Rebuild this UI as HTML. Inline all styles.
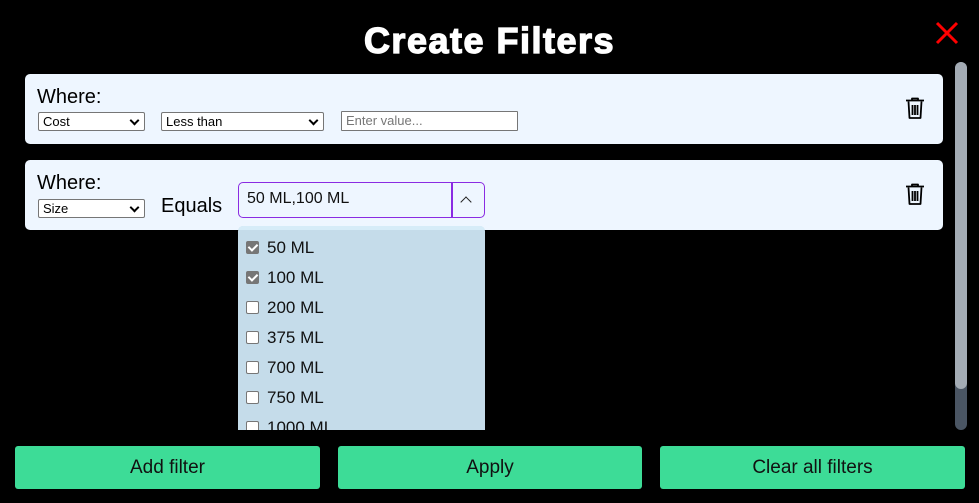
<!DOCTYPE html>
<html><head><style>
*{box-sizing:border-box;margin:0;padding:0}
body{width:979px;height:503px;background:#000;font-family:"Liberation Sans",Arial,sans-serif;position:relative;overflow:hidden}
.abs{position:absolute}
h1{position:absolute;left:0;width:979px;text-align:center;top:20px;color:#fff;font-size:36px;font-weight:900;letter-spacing:1.5px;-webkit-text-stroke:1.3px #fff}
.card{position:absolute;left:25px;width:918px;height:70px;background:#eef6ff;border-radius:5px}
.where{position:absolute;left:12px;top:12px;font-size:20px;color:#000}
.sel{position:absolute;height:19px;border:1px solid #767676;border-radius:2px;background:#fff;font-size:13px;padding-left:4px;line-height:17px;color:#000}
.sel.dd:after{content:"";position:absolute;right:6px;top:4px;width:5px;height:5px;border-right:2px solid #000;border-bottom:2px solid #000;transform:rotate(45deg)}
.btn{position:absolute;top:446px;height:43px;background:#3ddc97;border-radius:3px;text-align:center;line-height:43px;font-size:19px;color:#111}
.item{position:absolute;left:8px;font-size:17px;color:#111}
.cb{display:inline-block;width:13px;height:13px;border:1px solid #767676;border-radius:2px;background:#fff;vertical-align:-1px;margin-right:8px;position:relative}
.cb.on{background:#767676;border-color:#767676}
.cb.on:after{content:"";position:absolute;left:3px;top:0px;width:4px;height:7px;border-right:2px solid #fff;border-bottom:2px solid #fff;transform:rotate(45deg)}
</style></head><body>
<h1>Create Filters</h1>
<svg class="abs" style="left:934px;top:20px" width="26" height="26" viewBox="0 0 26 26"><path d="M3 3L23 23M23 3L3 23" stroke="#f00" stroke-width="3"/></svg>
<div class="abs" style="left:955px;top:62px;width:12px;height:368px;background:#4a5563;border-radius:6px"></div>
<div class="abs" style="left:955px;top:62px;width:12px;height:327px;background:#a3abb4;border-radius:6px"></div>

<div class="card" style="top:74px">
<div class="where">Where:</div>
<div class="sel dd" style="left:13px;top:38px;width:107px">Cost</div>
<div class="sel dd" style="left:136px;top:38px;width:163px">Less than</div>
<div class="sel" style="left:316px;top:37px;width:177px;height:20px;color:#777;border-radius:1px">Enter value...</div>
</div>
<div class="card" style="top:160px">
<div class="where">Where:</div>
<div class="sel dd" style="left:13px;top:39px;width:107px">Size</div>
<div class="abs" style="left:136px;top:35px;font-size:20px">Equals</div>
<div class="abs" style="left:213px;top:22px;width:247px;height:36px;border:1.5px solid #8a2be2;border-radius:5px;background:#eef6ff"></div>
<div class="abs" style="left:426px;top:22px;width:2px;height:36px;background:#8a2be2"></div>
<div class="abs" style="left:222px;top:30px;font-size:16px;color:#111">50 ML,100 ML</div>
<div class="abs" style="left:437px;top:38px;width:8px;height:8px;border-left:1.5px solid #222;border-top:1.5px solid #222;transform:rotate(45deg)"></div>
</div>
<svg class="abs" style="left:904px;top:96px" width="22" height="24" viewBox="0 0 22 24"><path d="M2 4.5H20M8 4V2.5H14V4M4.5 5.5L5.5 22H16.5L17.5 5.5M8.5 9V19M11 9V19M13.5 9V19" stroke="#000" stroke-width="1.8" fill="none" stroke-linejoin="round"/></svg>
<svg class="abs" style="left:904px;top:182px" width="22" height="24" viewBox="0 0 22 24"><path d="M2 4.5H20M8 4V2.5H14V4M4.5 5.5L5.5 22H16.5L17.5 5.5M8.5 9V19M11 9V19M13.5 9V19" stroke="#000" stroke-width="1.8" fill="none" stroke-linejoin="round"/></svg>

<div class="abs" style="left:238px;top:226px;width:247px;height:204px;background:#c5dcea;overflow:hidden;border-radius:5px 5px 0 0">
<div class="abs" style="left:0;top:0;width:247px;height:4px;background:#d6ecf8"></div>
<div class="item" style="top:12px"><span class="cb on"></span>50 ML</div>
<div class="item" style="top:42px"><span class="cb on"></span>100 ML</div>
<div class="item" style="top:72px"><span class="cb"></span>200 ML</div>
<div class="item" style="top:102px"><span class="cb"></span>375 ML</div>
<div class="item" style="top:132px"><span class="cb"></span>700 ML</div>
<div class="item" style="top:162px"><span class="cb"></span>750 ML</div>
<div class="item" style="top:192px"><span class="cb"></span>1000 ML</div>
</div>

<div class="btn" style="left:15px;width:305px">Add filter</div>
<div class="btn" style="left:338px;width:304px">Apply</div>
<div class="btn" style="left:660px;width:305px">Clear all filters</div>
</body></html>
